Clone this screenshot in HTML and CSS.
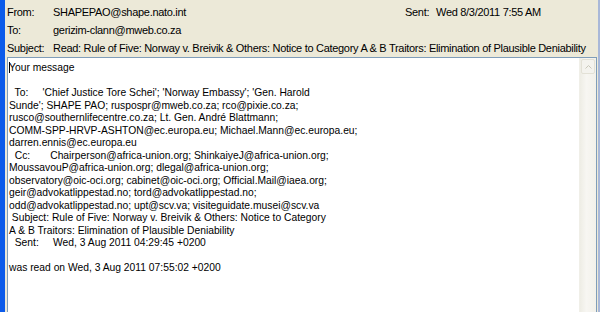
FILE: index.html
```html
<!DOCTYPE html>
<html lang="en">
<head>
    <meta charset="UTF-8">
    <title>Read: Rule of Five</title>
    <link rel="stylesheet" href="styles.css">
</head>
<body>
    <div class="window">
        <div class="headers">
            <div class="row">
                <span class="label">From:</span>
                <span class="value from">SHAPEPAO@shape.nato.int</span>
                <span class="sent-label">Sent:</span>
                <span class="value">Wed 8/3/2011 7:55 AM</span>
            </div>
            <div class="row">
                <span class="label">To:</span>
                <span class="value">gerizim-clann@mweb.co.za</span>
            </div>
            <div class="row">
                <span class="label">Subject:</span>
                <span class="value">Read: Rule of Five: Norway v. Breivik &amp; Others: Notice to Category A &amp; B Traitors: Elimination of Plausible Deniability</span>
            </div>
        </div>

        <div class="message">
            <div class="body"><span class="caret"></span>Your message

  To:     'Chief Justice Tore Schei'; 'Norway Embassy'; 'Gen. Harold
Sunde'; SHAPE PAO; ruspospr@mweb.co.za; rco@pixie.co.za;
rusco@southernlifecentre.co.za; Lt. Gen. André Blattmann;
COMM-SPP-HRVP-ASHTON@ec.europa.eu; Michael.Mann@ec.europa.eu;
darren.ennis@ec.europa.eu
  Cc:       Chairperson@africa-union.org; ShinkaiyeJ@africa-union.org;
MoussavouP@africa-union.org; dlegal@africa-union.org;
observatory@oic-oci.org; cabinet@oic-oci.org; Official.Mail@iaea.org;
geir@advokatlippestad.no; tord@advokatlippestad.no;
odd@advokatlippestad.no; upt@scv.va; visiteguidate.musei@scv.va
 Subject: Rule of Five: Norway v. Breivik &amp; Others: Notice to Category
A &amp; B Traitors: Elimination of Plausible Deniability
  Sent:     Wed, 3 Aug 2011 04:29:45 +0200

was read on Wed, 3 Aug 2011 07:55:02 +0200</div>
            <div class="scrollbar">
                <div class="scroll-up">
                    <svg width="7" height="4" viewBox="0 0 7 4"><path d="M0.5 3.5 L3.5 0.5 L6.5 3.5" fill="none" stroke="#c9c7ba" stroke-width="1"/></svg>
                </div>
            </div>
        </div>
    </div>
</body>
</html>
```

FILE: styles.css
```css
* {
    box-sizing: border-box;
    margin: 0;
    padding: 0;
}

body {
    width: 600px;
    height: 312px;
    overflow: hidden;
    background: #ece9d8;
    font-family: "Liberation Sans", Arial, sans-serif;
    color: #000;
}

.window {
    height: 312px;
    border-left: 5px solid #0c5bea;
    border-right: 2px solid #a9b8d8;
    padding-left: 2px;
    padding-right: 1px;
    display: flex;
    flex-direction: column;
}

.headers {
    padding-top: 3px;
    height: 57px;
    font-size: 11px;
    letter-spacing: -0.3px;
}

.row {
    display: flex;
    height: 18px;
    align-items: center;
}

.label {
    width: 46px;
    flex-shrink: 0;
}

.value {
    white-space: nowrap;
}

.from {
    width: 352px;
}

.sent-label {
    width: 31px;
}

.message {
    flex: 1;
    display: flex;
    background: #fff;
    border: 1px solid #7f9db9;
    border-bottom: none;
}

.body {
    flex: 1;
    padding: 4px 0 0 1px;
    font-size: 10.3px;
    line-height: 12.5px;
    white-space: pre;
    overflow: hidden;
}

.caret {
    display: inline-block;
    width: 1px;
    height: 11px;
    background: #000;
    vertical-align: -2px;
    margin-right: -1px;
}

.scrollbar {
    width: 17px;
    background: linear-gradient(to right, #eeede5, #f7f6f2 40%, #f3f1ea);
    border-left: 1px solid #f0efe8;
    padding: 1px;
}

.scroll-up {
    height: 15px;
    border: 1px solid #e3e1d6;
    border-radius: 2px;
    background: #f4f3ee;
    display: flex;
    align-items: center;
    justify-content: center;
}
```
